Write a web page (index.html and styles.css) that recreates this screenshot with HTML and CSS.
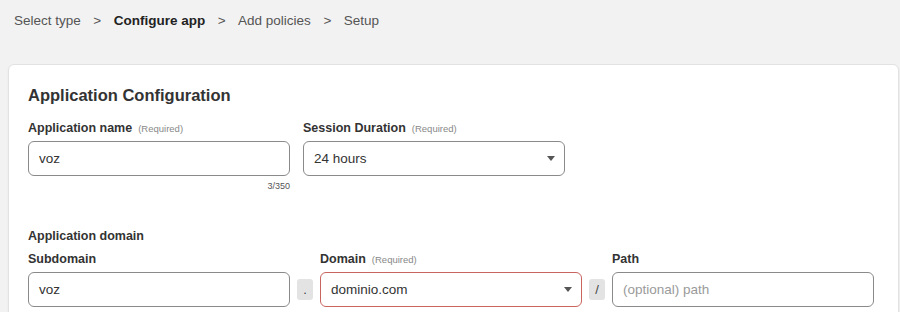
FILE: index.html
```html
<!DOCTYPE html>
<html lang="en">
<head>
  <meta charset="UTF-8" />
  <title>Configure app</title>
  <link rel="stylesheet" href="styles.css">
</head>
<body>

  <!-- Steps -->
  <nav class="steps">
    <span>Select type</span>
    <span class="sep">&gt;</span>
    <span class="current">Configure app</span>
    <span class="sep">&gt;</span>
    <span>Add policies</span>
    <span class="sep">&gt;</span>
    <span>Setup</span>
  </nav>

  <!-- Card -->
  <div class="card">
    <h2>Application Configuration</h2>

    <div class="row">
      <div class="field">
        <label>Application name <small>(Required)</small></label>
        <div class="box">voz</div>
        <div class="counter">3/350</div>
      </div>
      <div class="field">
        <label>Session Duration <small>(Required)</small></label>
        <div class="box select">24 hours <span class="caret"></span></div>
      </div>
    </div>

    <h3>Application domain</h3>

    <div class="row domain">
      <div class="field">
        <label>Subdomain</label>
        <div class="box">voz</div>
      </div>
      <div class="joiner">.</div>
      <div class="field">
        <label>Domain <small>(Required)</small></label>
        <div class="box select error">dominio.com <span class="caret"></span></div>
      </div>
      <div class="joiner">/</div>
      <div class="field">
        <label>Path</label>
        <div class="box placeholder">(optional) path</div>
      </div>
    </div>
  </div>

</body>
</html>
```

FILE: styles.css
```css
* { box-sizing: border-box; }
body {
  margin: 0;
  background: #f2f2f2;
  font-family: 'Liberation Sans', Arial, sans-serif;
  color: #333;
}

.steps {
  display: flex;
  padding: 13px 14px 35px;
  font-size: 13.5px;
  line-height: 16px;
  color: #555;
}
.steps .sep { margin: 0 12.5px; }
.steps .current { font-weight: 700; color: #222; }

.card {
  margin: 0 1px 0 8px;
  height: 260px;
  background: #fff;
  border: 1px solid #e2e2e2;
  border-radius: 6px;
  box-shadow: 0 1px 2px rgba(0,0,0,0.06);
  padding: 19px 19px;
}

h2 {
  margin: 0 0 14px;
  font-size: 16.5px;
  line-height: 22px;
  font-weight: 700;
  color: #333;
}

h3 {
  margin: 36px 0 7px;
  font-size: 12.5px;
  line-height: 16px;
  font-weight: 700;
  color: #333;
}

.row { display: flex; gap: 13px; }
.row.domain { gap: 7px; }
.field { width: 262px; }

label {
  display: flex;
  align-items: baseline;
  gap: 6px;
  height: 16px;
  font-size: 12.5px;
  line-height: 16px;
  font-weight: 700;
  color: #333;
  margin-bottom: 5px;
}
label small {
  font-size: 9.5px;
  font-weight: 400;
  color: #888;
}

.box {
  position: relative;
  height: 35px;
  border: 1px solid #8a8a8a;
  border-radius: 6px;
  padding: 0 10px;
  font-size: 13.5px;
  line-height: 33px;
  color: #333;
}
.box.error { border-color: #c9645e; }
.box.placeholder { color: #9a9a9a; }

.caret {
  position: absolute;
  right: 9px;
  top: 14px;
  border-left: 4.5px solid transparent;
  border-right: 4.5px solid transparent;
  border-top: 5px solid #555;
}

.counter {
  margin-top: 4px;
  text-align: right;
  font-size: 9px;
  line-height: 12px;
  color: #555;
}

.joiner {
  align-self: flex-end;
  width: 16px;
  height: 21px;
  margin-bottom: 7px;
  background: #e3e3e3;
  border-radius: 3px;
  text-align: center;
  font-size: 13px;
  line-height: 21px;
  color: #444;
}
```
